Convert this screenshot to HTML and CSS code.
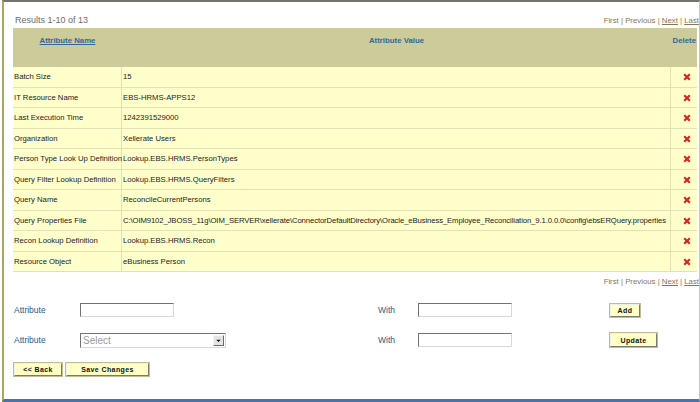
FILE: index.html
```html
<!DOCTYPE html>
<html>
<head>
<meta charset="utf-8">
<link rel="stylesheet" href="styles.css">
</head>
<body>
<div class="frame">
  <div class="pager-row top">
    <span class="results">Results 1-10 of 13</span>
    <span class="pager">First | Previous | <u>Next</u> | <u>Last</u></span>
  </div>
  <table class="grid">
    <colgroup><col class="c1"><col class="c2"><col class="c3"></colgroup>
    <thead>
      <tr><th><u>Attribute Name</u></th><th>Attribute Value</th><th>Delete</th></tr>
    </thead>
    <tbody>
      <tr><td>Batch Size</td><td>15</td><td class="del"><svg viewBox="0 0 8 8"><path d="M1.2 1.2 6.8 6.8M6.8 1.2 1.2 6.8"/></svg></td></tr>
      <tr><td>IT Resource Name</td><td>EBS-HRMS-APPS12</td><td class="del"><svg viewBox="0 0 8 8"><path d="M1.2 1.2 6.8 6.8M6.8 1.2 1.2 6.8"/></svg></td></tr>
      <tr><td>Last Execution Time</td><td>1242391529000</td><td class="del"><svg viewBox="0 0 8 8"><path d="M1.2 1.2 6.8 6.8M6.8 1.2 1.2 6.8"/></svg></td></tr>
      <tr><td>Organization</td><td>Xellerate Users</td><td class="del"><svg viewBox="0 0 8 8"><path d="M1.2 1.2 6.8 6.8M6.8 1.2 1.2 6.8"/></svg></td></tr>
      <tr><td>Person Type Look Up Definition</td><td>Lookup.EBS.HRMS.PersonTypes</td><td class="del"><svg viewBox="0 0 8 8"><path d="M1.2 1.2 6.8 6.8M6.8 1.2 1.2 6.8"/></svg></td></tr>
      <tr><td>Query Filter Lookup Definition</td><td>Lookup.EBS.HRMS.QueryFilters</td><td class="del"><svg viewBox="0 0 8 8"><path d="M1.2 1.2 6.8 6.8M6.8 1.2 1.2 6.8"/></svg></td></tr>
      <tr><td>Query Name</td><td>ReconcileCurrentPersons</td><td class="del"><svg viewBox="0 0 8 8"><path d="M1.2 1.2 6.8 6.8M6.8 1.2 1.2 6.8"/></svg></td></tr>
      <tr><td>Query Properties File</td><td class="long">C:\OIM9102_JBOSS_11g\OIM_SERVER\xellerate\ConnectorDefaultDirectory\Oracle_eBusiness_Employee_Reconciliation_9.1.0.0.0\config\ebsERQuery.properties</td><td class="del"><svg viewBox="0 0 8 8"><path d="M1.2 1.2 6.8 6.8M6.8 1.2 1.2 6.8"/></svg></td></tr>
      <tr><td>Recon Lookup Definition</td><td>Lookup.EBS.HRMS.Recon</td><td class="del"><svg viewBox="0 0 8 8"><path d="M1.2 1.2 6.8 6.8M6.8 1.2 1.2 6.8"/></svg></td></tr>
      <tr><td>Resource Object</td><td>eBusiness Person</td><td class="del"><svg viewBox="0 0 8 8"><path d="M1.2 1.2 6.8 6.8M6.8 1.2 1.2 6.8"/></svg></td></tr>
    </tbody>
  </table>
  <div class="pager-row bottom">
    <span class="pager">First | Previous | <u>Next</u> | <u>Last</u></span>
  </div>
  <div class="form">
    <span class="lbl">Attribute</span>
    <span><input class="txt" type="text"></span>
    <span class="lbl">With</span>
    <span><input class="txt" type="text"></span>
    <span><button class="btn add">Add</button></span>

    <span class="lbl">Attribute</span>
    <span class="select"><span class="sel-text">Select</span><span class="sel-arrow"><svg viewBox="0 0 8 8"><path d="M1.5 3h5L4 5.8z"/></svg></span></span>
    <span class="lbl">With</span>
    <span><input class="txt" type="text"></span>
    <span><button class="btn upd">Update</button></span>
  </div>
  <div class="actions">
    <button class="btn back">&lt;&lt; Back</button>
    <button class="btn save">Save Changes</button>
  </div>
</div>
</body>
</html>
```
FILE: styles.css
```css
html, body {
  margin: 0;
  padding: 0;
  background: #fff;
}
body {
  width: 700px;
  height: 402px;
  overflow: hidden;
  font-family: "Liberation Sans", Arial, sans-serif;
  font-size: 8px;
  color: #222;
}
.frame {
  box-sizing: border-box;
  height: 402px;
  margin-left: 2px;
  border-top: 2px solid #74746a;
  border-left: 2px solid #a9a85c;
  border-right: 1px solid #c8c8c8;
  border-bottom: 3px solid #4d72a4;
  padding-left: 9px;
  overflow: hidden;
}
.pager-row {
  display: flex;
  align-items: center;
  justify-content: space-between;
}
.pager-row.top {
  height: 26px;
}
.results {
  font-size: 9px;
  color: #6b6b6b;
  padding-left: 2px;
  padding-top: 10px;
}
.pager {
  color: #8a7556;
  font-size: 7.8px;
  white-space: nowrap;
  padding-top: 10px;
  margin-right: 0;
}
.pager-row.bottom {
  justify-content: flex-end;
  height: 18px;
}
.pager-row.bottom .pager { padding-top: 0; }
.grid {
  table-layout: fixed;
  border-collapse: separate;
  border-spacing: 0;
  width: 684px;
}
.c1 { width: 109px; }
.c2 { width: 549px; }
.c3 { width: 26px; }
.grid th {
  background: #cccc9a;
  color: #336699;
  font-weight: bold;
  font-size: 7.8px;
  height: 39px;
  vertical-align: top;
  padding: 8px 0 0;
  text-align: center;
  box-sizing: border-box;
}
.grid th:last-child { text-align: right; padding-right: 1px; }
.grid td {
  background: #ffffcc;
  height: 20.5px;
  box-sizing: border-box;
  padding: 0 0 0 1px;
  border-bottom: 1px solid #e2e2b4;
  border-right: 1px solid #e2e2b4;
  white-space: nowrap;
  overflow: visible;
  vertical-align: middle;
  font-size: 7.7px;
}
.grid td:last-child { border-right: none; }
.grid td.long { letter-spacing: -0.1px; }
.grid td.del {
  text-align: center;
  padding: 0;
}
.del svg {
  width: 8px;
  height: 8px;
  display: inline-block;
  vertical-align: middle;
  margin-left: 5px;
}
.del path {
  stroke: #d42a1e;
  stroke-width: 2.2;
  fill: none;
}
.form {
  display: grid;
  grid-template-columns: 67px 297px 41px 192px auto;
  grid-auto-rows: 30px;
  align-items: center;
  margin-top: 5px;
}
.lbl {
  color: #2f5a86;
  font-size: 8.5px;
  padding-left: 1px;
}
.txt {
  box-sizing: border-box;
  width: 94px;
  height: 14px;
  margin: 0;
  padding: 0;
  background: #fff;
  border: 1px solid;
  border-color: #727272 #d8d8d8 #d8d8d8 #727272;
  display: block;
}
.select {
  box-sizing: border-box;
  width: 146px;
  height: 15px;
  border: 1px solid;
  border-color: #727272 #d8d8d8 #d8d8d8 #727272;
  display: flex;
  align-items: center;
  justify-content: space-between;
  background: #fff;
}
.sel-text {
  color: #9a9a9a;
  font-size: 10px;
  padding-left: 2px;
}
.sel-arrow {
  width: 11px;
  height: 11px;
  box-sizing: border-box;
  background: #e4e4e4;
  border: 1px solid;
  border-color: #f6f6f6 #6a6a6a #6a6a6a #f6f6f6;
  display: flex;
  align-items: center;
  justify-content: center;
  margin-right: 1px;
}
.sel-arrow svg { width: 7px; height: 7px; }
.sel-arrow path { fill: #111; }
.btn {
  box-sizing: border-box;
  font-family: "Liberation Sans", Arial, sans-serif;
  font-size: 7px;
  font-weight: bold;
  letter-spacing: 0.4px;
  color: #111;
  background: #ffffc6;
  border: 1px solid;
  border-color: #f0f0e0 #7a7a6a #7a7a6a #f0f0e0;
  outline: 1px solid #bdbd9a;
  height: 13px;
  padding: 0;
  margin: 0;
  display: block;
}
.add { width: 30px; }
.upd { width: 47px; height: 14px; }
.actions {
  display: flex;
  gap: 4px;
  margin-top: 8px;
  padding-left: 1px;
}
.back { width: 48px; }
.save { width: 83px; }
```
